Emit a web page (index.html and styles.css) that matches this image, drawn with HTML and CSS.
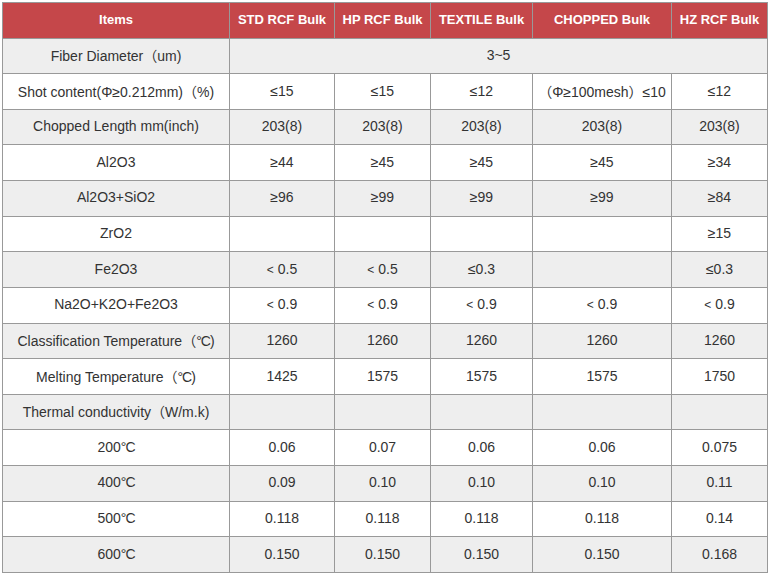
FILE: index.html
```html
<!DOCTYPE html>
<html>
<head>
<meta charset="utf-8">
<link rel="stylesheet" href="styles.css">
</head>
<body>
<div class="wrap">
<table class="spec">
<colgroup>
<col class="c0"><col class="c1"><col class="c2"><col class="c3"><col class="c4"><col class="c5">
</colgroup>
<thead>
<tr><th>Items</th><th>STD RCF Bulk</th><th>HP RCF Bulk</th><th>TEXTILE Bulk</th><th>CHOPPED Bulk</th><th>HZ RCF Bulk</th></tr>
</thead>
<tbody>
<tr class="g"><td>Fiber Diameter（um)</td><td colspan="5">3~5</td></tr>
<tr><td>Shot content(Φ≥0.212mm)（%)</td><td>≤15</td><td>≤15</td><td>≤12</td><td>（Φ≥100mesh）≤10</td><td>≤12</td></tr>
<tr class="g"><td>Chopped Length mm(inch)</td><td>203(8)</td><td>203(8)</td><td>203(8)</td><td>203(8)</td><td>203(8)</td></tr>
<tr><td>Al2O3</td><td>≥44</td><td>≥45</td><td>≥45</td><td>≥45</td><td>≥34</td></tr>
<tr class="g"><td>Al2O3+SiO2</td><td>≥96</td><td>≥99</td><td>≥99</td><td>≥99</td><td>≥84</td></tr>
<tr><td>ZrO2</td><td></td><td></td><td></td><td></td><td>≥15</td></tr>
<tr class="g"><td>Fe2O3</td><td><span class="lt">&lt;</span>0.5</td><td><span class="lt">&lt;</span>0.5</td><td>≤0.3</td><td></td><td>≤0.3</td></tr>
<tr><td>Na2O+K2O+Fe2O3</td><td><span class="lt">&lt;</span>0.9</td><td><span class="lt">&lt;</span>0.9</td><td><span class="lt">&lt;</span>0.9</td><td><span class="lt">&lt;</span>0.9</td><td><span class="lt">&lt;</span>0.9</td></tr>
<tr class="g"><td>Classification Temperature（<span class="dc">°C</span>)</td><td>1260</td><td>1260</td><td>1260</td><td>1260</td><td>1260</td></tr>
<tr><td>Melting Temperature（<span class="dc">°C</span>)</td><td>1425</td><td>1575</td><td>1575</td><td>1575</td><td>1750</td></tr>
<tr class="g"><td>Thermal conductivity（W/m.k)</td><td></td><td></td><td></td><td></td><td></td></tr>
<tr><td>200<span class="dc">°C</span></td><td>0.06</td><td>0.07</td><td>0.06</td><td>0.06</td><td>0.075</td></tr>
<tr class="g"><td>400<span class="dc">°C</span></td><td>0.09</td><td>0.10</td><td>0.10</td><td>0.10</td><td>0.11</td></tr>
<tr><td>500<span class="dc">°C</span></td><td>0.118</td><td>0.118</td><td>0.118</td><td>0.118</td><td>0.14</td></tr>
<tr class="g"><td>600<span class="dc">°C</span></td><td>0.150</td><td>0.150</td><td>0.150</td><td>0.150</td><td>0.168</td></tr>
</tbody>
</table>
</div>
</body>
</html>
```
FILE: styles.css
```css
html, body {
  margin: 0;
  padding: 0;
  background: #ffffff;
}
.wrap {
  padding: 2px 0 0 2px;
}
.spec {
  border-collapse: collapse;
  table-layout: fixed;
  width: 765px;
  height: 571px;
  font-family: "Liberation Sans", Arial, "Noto Sans CJK SC", sans-serif;
  font-size: 14px;
  color: #333333;
}
.c0 { width: 227px; }
.c1 { width: 105px; }
.c2 { width: 96px; }
.c3 { width: 102px; }
.c4 { width: 139px; }
.c5 { width: 96px; }
.spec th, .spec td {
  border: 1px solid #999999;
  text-align: center;
  vertical-align: middle;
  padding: 0 2px 2px;
  white-space: nowrap;
}
.spec th {
  background: #c5474a;
  color: #ffffff;
  font-weight: bold;
  font-size: 13px;
}
.spec tr { height: 35.6px; }
.spec tr.g td { background: #eeeeee; }
.lt {
  font-size: 12px;
  margin-right: 4px;
}
.dc {
  letter-spacing: -1px;
}
```
